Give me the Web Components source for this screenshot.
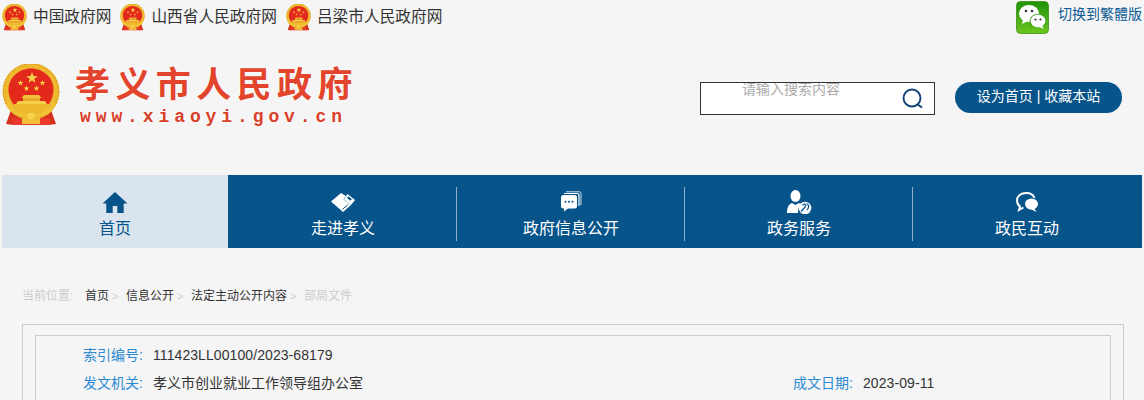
<!DOCTYPE html>
<html lang="zh-CN"><head><meta charset="utf-8"><title>孝义市人民政府</title>
<style>
html,body{margin:0;padding:0;background:#f5f5f5;height:400px;overflow:hidden}
body{font-family:"Liberation Sans","Noto Sans CJK SC",sans-serif;color:#333}
</style></head>
<body>
<gov-topbar></gov-topbar>
<gov-header></gov-header>
<gov-nav></gov-nav>
<gov-crumbs></gov-crumbs>
<gov-meta></gov-meta>
<script>
const FONT='"Liberation Sans","Noto Sans CJK SC",sans-serif';
const star=(x,y,r,f)=>{let p=[];for(let i=0;i<10;i++){const a=-Math.PI/2+i*Math.PI/5,q=i%2?r*.4:r;p.push((x+q*Math.cos(a)).toFixed(2)+','+(y+q*Math.sin(a)).toFixed(2));}return `<polygon points="${p.join(' ')}" fill="${f}"/>`;};
const EMBLEM=`<svg viewBox="0 0 58 62" aria-hidden="true" style="display:block;width:100%;height:100%">
<path d="M9 46L4 60l8 1 3-6h28l3 6 8-1-5-14z" fill="#d8301f"/>
<circle cx="29" cy="27.500" r="28.500" fill="#eeb92f"/>
<circle cx="29" cy="27.500" r="27.500" fill="none" stroke="#c98a1c" stroke-width="1" stroke-dasharray="1.500 2"/>
<path d="M29 4.500c12 0 22.500 9 22.500 21 0 7-3 13-7 17h-31c-4-4-7-10-7-17 0-12 10.500-21 22.500-21z" fill="#e3291b"/>
${star(30,14,6,'#f8d44c')}${star(18.500,19,3,'#f8d44c')}${star(24.500,24.500,3,'#f8d44c')}${star(34.500,24.500,3,'#f8d44c')}${star(40.500,19,3,'#f8d44c')}
<path d="M22 31h15l2.500 3h-20z" fill="#f3c23c"/><path d="M21 34h17v3H21z" fill="#e9a92a"/><path d="M16 37h27l2 3H14z" fill="#f6cf4a"/><path d="M12 40h35v3.500H12z" fill="#efb82f"/>
<path d="M6 37c4 9 12 13 23 13s19-4 23-13l1.500 4c-3 8-13 13-24.500 13S7.500 49 4.500 41z" fill="#f2c236"/>
<path d="M10 54.500h38v6.500H10z" fill="#e8392a"/><path d="M20 54h18v6H20z" fill="#f0bf37"/><circle cx="29" cy="52" r="3.500" fill="#f8d44c"/>
</svg>`;
function def(name,html){customElements.define(name,class extends HTMLElement{constructor(){super();this.attachShadow({mode:'open'}).innerHTML=html;}});}

def('gov-emblem',`<style>:host{display:block;width:var(--s,24px);height:calc(var(--s,24px)*1.07);flex:none}</style>${EMBLEM}`);

def('gov-toplink',`<style>:host{display:flex;align-items:center;gap:6px;font:15.7px/24px ${FONT};color:#333}
gov-emblem{--s:25px}</style><gov-emblem></gov-emblem><slot></slot>`);

def('gov-topbar',`<style>
:host{display:flex;justify-content:space-between;height:34px;padding:0 2px}
.l{display:flex;gap:9px;padding-top:4px;align-items:flex-start}
.r{display:flex;gap:9px;padding-top:1px;align-items:flex-start}
.t{font:14px/26px ${FONT};color:#0b5a93}
svg{display:block}
</style>
<div class="l"><gov-toplink>中国政府网</gov-toplink><gov-toplink>山西省人民政府网</gov-toplink><gov-toplink>吕梁市人民政府网</gov-toplink></div>
<div class="r"><svg width="33" height="33" viewBox="0 0 33 33"><defs><linearGradient id="g" x1="0" y1="0" x2="0" y2="1"><stop offset="0" stop-color="#1f930a"/><stop offset="1" stop-color="#6cc51f"/></linearGradient></defs>
<rect x=".5" y=".5" width="32" height="32" rx="4" fill="url(#g)" stroke="#3f8f12" stroke-width=".8"/>
<ellipse cx="13" cy="12.500" rx="10" ry="8.500" fill="#fff"/><path d="M7 18l-1 5 6-3z" fill="#fff"/>
<ellipse cx="22" cy="20" rx="8.500" ry="7.200" fill="#2f9c0c"/>
<ellipse cx="22" cy="20" rx="7.500" ry="6.500" fill="#fff"/><path d="M26 25l2 3-5-2z" fill="#fff"/>
<circle cx="10" cy="10" r="1.300" fill="#333"/><circle cx="16" cy="10" r="1.300" fill="#333"/><circle cx="19.500" cy="18.500" r="1.100" fill="#333"/><circle cx="24.500" cy="18.500" r="1.100" fill="#333"/></svg>
<div class="t">切换到繁體版</div></div>`);

def('gov-search',`<style>
:host{display:block;box-sizing:border-box;width:235px;height:33px;background:#fff;border:1px solid #333;overflow:hidden}
.b{display:flex;justify-content:space-between;padding-left:41px;padding-right:10px;height:100%}
.p{font:14px/14px ${FONT};color:#aaa;margin-top:-1px}
svg{margin-top:5px;display:block}
</style><div class="b"><div class="p">请输入搜索内容</div>
<svg width="22" height="22" viewBox="0 0 22 22" fill="none" stroke="#0c3f75"><circle cx="10" cy="10" r="8.500" stroke-width="1.800"/><path d="M15.500 16.500l4.500 3" stroke-width="2"/></svg></div>`);

def('gov-header',`<style>
:host{display:flex;justify-content:space-between;height:141px;padding:0 22px 0 2px;box-sizing:border-box}
.logo{display:flex;gap:15px;padding-top:30px;align-items:flex-start}
gov-emblem{--s:58px}
.n{display:flex;flex-direction:column}
.c{font:700 35px/42px "Liberation Serif","Noto Sans CJK SC",serif;letter-spacing:5.400px;color:#e2442c;margin-top:1px;text-shadow:0 0 3px #fff;white-space:nowrap}
.u{font:700 18px/20px "Liberation Mono",monospace;letter-spacing:4.900px;color:#d8402a;margin-left:5px;margin-top:0;text-shadow:0 0 3px #fff;white-space:nowrap}
.s{display:flex;gap:20px;padding-top:48px;align-items:flex-start}
.btn{width:167px;height:31px;border-radius:16px;background:#07548b;color:#fff;font:14px/29px ${FONT};text-align:center}
</style>
<div class="logo"><gov-emblem></gov-emblem><div class="n"><div class="c">孝义市人民政府</div><div class="u">www.xiaoyi.gov.cn</div></div></div>
<div class="s"><gov-search></gov-search><div class="btn">设为首页 | 收藏本站</div></div>`);

def('gov-navitem',`<style>
:host{flex:0 0 228px;box-sizing:border-box;padding-left:2px;display:flex;flex-direction:column;align-items:center;height:73px;color:#fff;position:relative}
:host([active]){flex-basis:226px;padding-left:0;background:#d9e4ee;color:#07548b}
.i{height:26px;margin-top:14px;display:flex;align-items:center}
.t{font:16px/22px ${FONT};margin-top:3px}
:host([div])::after{content:"";position:absolute;left:0;top:12px;height:54px;width:1px;background:#8fb0ca}
::slotted(svg){display:block}
</style><div class="i"><slot name="i"></slot></div><div class="t"><slot></slot></div>`);

def('gov-nav',`<style>:host{display:flex;margin:0 2px;height:73px;background:#07548b}</style>
<gov-navitem active>
<svg slot="i" width="26" height="22" viewBox="0 0 26 22" fill="#07548b"><path d="M13 1L.5 12.500h3.800V22h6.400v-7h4.600v7h6.400V12.500h3.800z"/></svg>首页</gov-navitem>
<gov-navitem>
<svg slot="i" width="26" height="22" viewBox="0 0 26 22"><path d="M1 10.500L11 2l5 3-2.500 3.500 7.500 5.500L13 21z" fill="#fff"/><path d="M12.500 18.500l3-3M15 16.500l3-3" stroke="#07548b" stroke-width="1"/><path d="M17.500 3l7.500 6-4 5-7-5.500z" fill="#fff"/><path d="M18.300 5.300l3.500 2.700-1.300 1.700-3.500-2.700z" fill="#07548b"/></svg>走进孝义</gov-navitem>
<gov-navitem div>
<svg slot="i" width="22" height="22" viewBox="0 0 22 22"><path d="M6 .8h13.500a1.500 1.500 0 0 1 1.500 1.500V14" fill="none" stroke="#fff" stroke-width="1" opacity=".8"/><path d="M4 2.500h13a2 2 0 0 1 2 2V15" fill="none" stroke="#fff" stroke-width="1.200"/><rect x="1" y="4" width="16" height="13.500" rx="2.500" fill="#fff"/><path d="M4 17v3.500L8.500 17z" fill="#fff"/><circle cx="5.500" cy="10.800" r="1" fill="#07548b"/><circle cx="9" cy="10.800" r="1" fill="#07548b"/><circle cx="12.500" cy="10.800" r="1" fill="#07548b"/></svg>政府信息公开</gov-navitem>
<gov-navitem div>
<svg slot="i" width="26" height="24" viewBox="0 0 26 24"><ellipse cx="9.500" cy="6" rx="5" ry="6" fill="#fff"/><path d="M1 23c0-6 2-9 5-10l3.500 2 3.500-2 2 1c-2 2-3 5-3 9z" fill="#fff"/><circle cx="19" cy="18" r="6.300" fill="#fff"/><path d="M15 21.500l4.500-5M16.500 15.200l2-1.200 1.800 2M20.500 13.500c2.500 1 3 4 .5 6.500" fill="none" stroke="#07548b" stroke-width="1.300"/></svg>政务服务</gov-navitem>
<gov-navitem div>
<svg slot="i" width="24" height="22" viewBox="0 0 24 22"><path d="M11 2C6 2 2 5 2 9.500c0 2.500 1 4.500 3 6L4 19l4.500-2.500" fill="none" stroke="#fff" stroke-width="2"/><path d="M11 2c4 0 7.500 2 8.500 5" fill="none" stroke="#fff" stroke-width="2"/><ellipse cx="16.500" cy="13" rx="6.500" ry="5.500" fill="#fff"/><path d="M19 17l2.500 4-6-3z" fill="#fff"/></svg>政民互动</gov-navitem>`);

def('gov-crumbs',`<style>
:host{display:flex;align-items:center;height:20px;margin:38px 0 0 22px;font:12px/20px ${FONT};color:#ccc;white-space:nowrap}
.h{width:63px}
.a{color:#333}
.s{width:17px;font-size:11px;padding-left:3px;box-sizing:border-box}
</style><span class="h">当前位置:</span><span class="a">首页</span><span class="s">&gt;</span><span class="a">信息公开</span><span class="s">&gt;</span><span class="a">法定主动公开内容</span><span class="s">&gt;</span><span>部局文件</span>`);

def('gov-meta',`<style>
:host{display:block;box-sizing:border-box;margin:18px 20px 0 22px;height:76px;border:1px solid #ccc;border-bottom:0;padding:10px 12px 0;overflow:hidden}
.in{box-sizing:border-box;height:65px;border:1px solid #ccc;border-bottom:0;padding:5px 0 0 47px;overflow:hidden;
 display:grid;grid-template-columns:710px 1fr;grid-auto-rows:28px;font:14px/28px ${FONT};color:#333;white-space:nowrap}
.c{display:flex;gap:10px}
b{font-weight:400;color:#2a8ad2;width:60px}
.n{letter-spacing:.08px}
</style><div class="in">
<div class="c" style="grid-column:1/3"><b>索引编号:</b><span class="n">111423LL00100/2023-68179</span></div>
<div class="c"><b>发文机关:</b><span>孝义市创业就业工作领导组办公室</span></div>
<div class="c"><b>成文日期:</b><span class="n">2023-09-11</span></div>
</div>`);
</script>
</body></html>
